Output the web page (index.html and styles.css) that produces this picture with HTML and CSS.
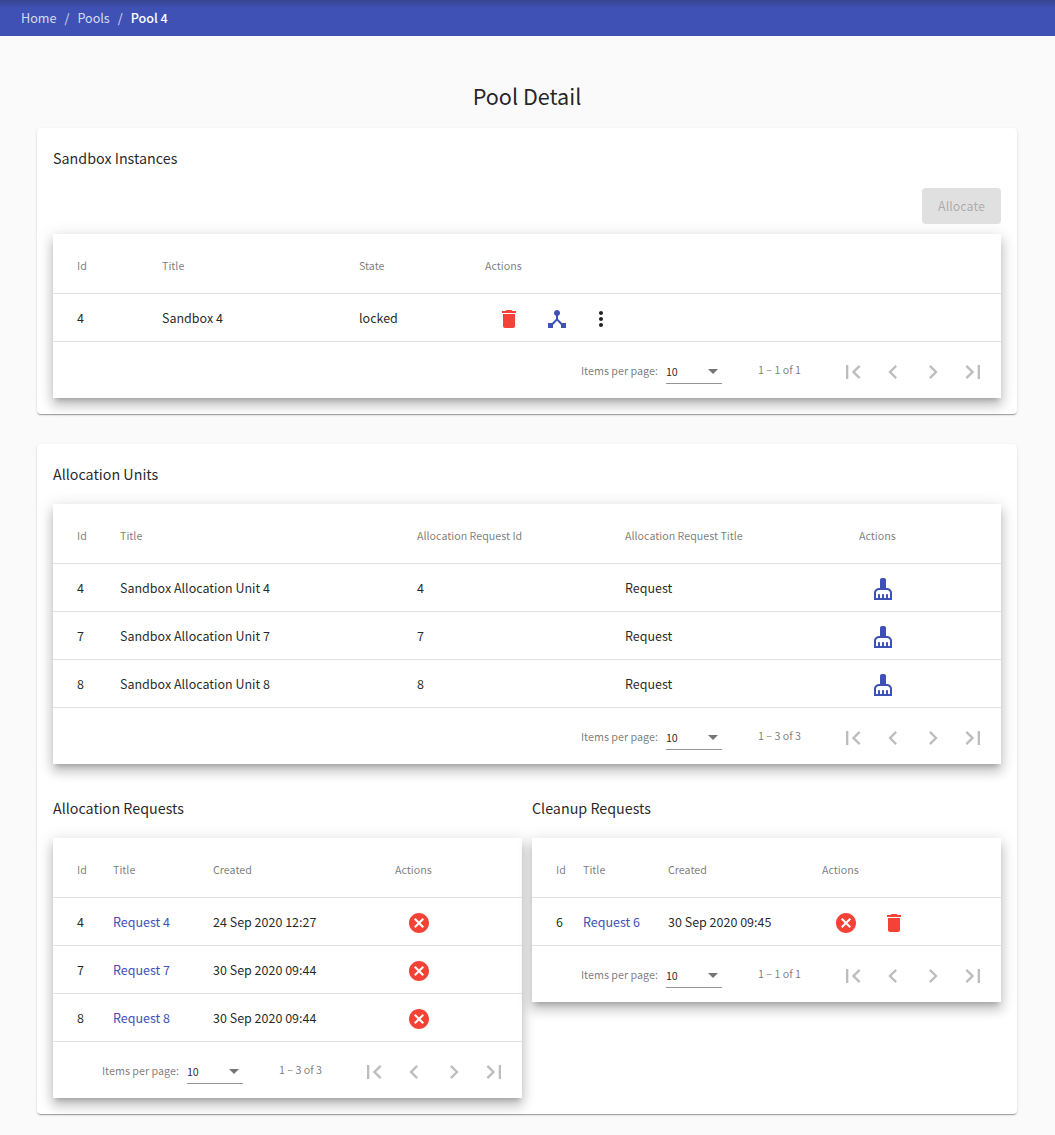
FILE: index.html
```html
<!DOCTYPE html>
<html lang="en">
<head>
    <meta charset="UTF-8">
    <title>Pool Detail</title>
    <link rel="stylesheet" href="styles.css">
</head>
<body>
    <svg class="defs" width="0" height="0">
        <symbol id="i-delete" viewBox="0 0 24 24"><path d="M6 19c0 1.1.9 2 2 2h8c1.1 0 2-.9 2-2V7H6v12zM19 4h-3.5l-1-1h-5l-1 1H5v2h14V4z"/></symbol>
        <symbol id="i-hub" viewBox="0 0 24 24"><path d="M17 16l-4-4V8.82C14.16 8.4 15 7.3 15 6c0-1.66-1.34-3-3-3S9 4.34 9 6c0 1.3.84 2.4 2 2.82V12l-4 4H3v5h5v-3.05l4-4.2 4 4.2V21h5v-5h-4z"/></symbol>
        <symbol id="i-more" viewBox="0 0 24 24"><path d="M12 8c1.1 0 2-.9 2-2s-.9-2-2-2-2 .9-2 2 .9 2 2 2zm0 2c-1.1 0-2 .9-2 2s.9 2 2 2 2-.9 2-2-.9-2-2-2zm0 6c-1.1 0-2 .9-2 2s.9 2 2 2 2-.9 2-2-.9-2-2-2z"/></symbol>
        <symbol id="i-broom" viewBox="0 0 24 24"><path d="M16 11h-1V3c0-1.1-.9-2-2-2h-2c-1.1 0-2 .9-2 2v8H8c-2.76 0-5 2.24-5 5v7h18v-7c0-2.76-2.24-5-5-5zm3 10h-2v-3c0-.55-.45-1-1-1s-1 .45-1 1v3h-2v-3c0-.55-.45-1-1-1s-1 .45-1 1v3H9v-3c0-.55-.45-1-1-1s-1 .45-1 1v3H5v-5c0-1.65 1.35-3 3-3h8c1.65 0 3 1.35 3 3v5z"/></symbol>
        <symbol id="i-cancel" viewBox="0 0 24 24"><path d="M12 2C6.47 2 2 6.47 2 12s4.47 10 10 10 10-4.47 10-10S17.53 2 12 2zm5 13.59L15.59 17 12 13.41 8.41 17 7 15.59 10.59 12 7 8.41 8.41 7 12 10.59 15.59 7 17 8.41 13.41 12 17 15.59z"/></symbol>
        <symbol id="i-first" viewBox="0 0 24 24"><path d="M18.41 16.59L13.82 12l4.59-4.59L17 6l-6 6 6 6zM6 6h2v12H6z"/></symbol>
        <symbol id="i-prev" viewBox="0 0 24 24"><path d="M15.41 7.41L14 6l-6 6 6 6 1.41-1.41L10.83 12z"/></symbol>
        <symbol id="i-next" viewBox="0 0 24 24"><path d="M10 6L8.59 7.41 13.17 12l-4.58 4.59L10 18l6-6z"/></symbol>
        <symbol id="i-last" viewBox="0 0 24 24"><path d="M5.59 7.41L10.18 12l-4.59 4.59L7 18l6-6-6-6zM16 6h2v12h-2z"/></symbol>
    </svg>

    <nav class="toolbar">
        <a>Home</a><span class="sep">/</span><a>Pools</a><span class="sep">/</span><a class="current">Pool 4</a>
    </nav>

    <main class="page">
        <h1>Pool Detail</h1>

        <section class="card card-sandboxes">
            <h2>Sandbox Instances</h2>
            <div class="controls"><button class="btn-allocate" disabled>Allocate</button></div>
            <div class="table cols-sandboxes">
                <div class="row head"><span>Id</span><span>Title</span><span>State</span><span>Actions</span></div>
                <div class="row">
                    <span>4</span><span>Sandbox 4</span><span>locked</span>
                    <span class="actions">
                        <i class="action red"><svg><use href="#i-delete"/></svg></i>
                        <i class="action blue"><svg><use href="#i-hub"/></svg></i>
                        <i class="action dark tight"><svg><use href="#i-more"/></svg></i>
                    </span>
                </div>
                <div class="paginator">
                    <span class="per-page">Items per page:</span>
                    <span class="select">10<b class="arrow"></b></span>
                    <span class="range">1 – 1 of 1</span>
                    <span class="pages">
                        <svg><use href="#i-first"/></svg><svg><use href="#i-prev"/></svg><svg><use href="#i-next"/></svg><svg><use href="#i-last"/></svg>
                    </span>
                </div>
            </div>
        </section>

        <section class="card">
            <h2>Allocation Units</h2>
            <div class="table cols-units">
                <div class="row head"><span>Id</span><span>Title</span><span>Allocation Request Id</span><span>Allocation Request Title</span><span>Actions</span></div>
                <div class="row">
                    <span>4</span><span>Sandbox Allocation Unit 4</span><span>4</span><span>Request</span>
                    <span class="actions"><i class="action blue"><svg><use href="#i-broom"/></svg></i></span>
                </div>
                <div class="row">
                    <span>7</span><span>Sandbox Allocation Unit 7</span><span>7</span><span>Request</span>
                    <span class="actions"><i class="action blue"><svg><use href="#i-broom"/></svg></i></span>
                </div>
                <div class="row">
                    <span>8</span><span>Sandbox Allocation Unit 8</span><span>8</span><span>Request</span>
                    <span class="actions"><i class="action blue"><svg><use href="#i-broom"/></svg></i></span>
                </div>
                <div class="paginator">
                    <span class="per-page">Items per page:</span>
                    <span class="select">10<b class="arrow"></b></span>
                    <span class="range">1 – 3 of 3</span>
                    <span class="pages">
                        <svg><use href="#i-first"/></svg><svg><use href="#i-prev"/></svg><svg><use href="#i-next"/></svg><svg><use href="#i-last"/></svg>
                    </span>
                </div>
            </div>

            <div class="requests">
                <div>
                    <h2>Allocation Requests</h2>
                    <div class="table cols-alloc">
                        <div class="row head"><span>Id</span><span>Title</span><span>Created</span><span>Actions</span></div>
                        <div class="row">
                            <span>4</span><a>Request 4</a><span>24 Sep 2020 12:27</span>
                            <span class="actions"><i class="action red"><svg><use href="#i-cancel"/></svg></i></span>
                        </div>
                        <div class="row">
                            <span>7</span><a>Request 7</a><span>30 Sep 2020 09:44</span>
                            <span class="actions"><i class="action red"><svg><use href="#i-cancel"/></svg></i></span>
                        </div>
                        <div class="row">
                            <span>8</span><a>Request 8</a><span>30 Sep 2020 09:44</span>
                            <span class="actions"><i class="action red"><svg><use href="#i-cancel"/></svg></i></span>
                        </div>
                        <div class="paginator">
                            <span class="per-page">Items per page:</span>
                            <span class="select">10<b class="arrow"></b></span>
                            <span class="range">1 – 3 of 3</span>
                            <span class="pages">
                                <svg><use href="#i-first"/></svg><svg><use href="#i-prev"/></svg><svg><use href="#i-next"/></svg><svg><use href="#i-last"/></svg>
                            </span>
                        </div>
                    </div>
                </div>
                <div>
                    <h2>Cleanup Requests</h2>
                    <div class="table cols-cleanup">
                        <div class="row head"><span>Id</span><span>Title</span><span>Created</span><span>Actions</span></div>
                        <div class="row">
                            <span>6</span><a>Request 6</a><span>30 Sep 2020 09:45</span>
                            <span class="actions">
                                <i class="action red"><svg><use href="#i-cancel"/></svg></i>
                                <i class="action red"><svg><use href="#i-delete"/></svg></i>
                            </span>
                        </div>
                        <div class="paginator">
                            <span class="per-page">Items per page:</span>
                            <span class="select">10<b class="arrow"></b></span>
                            <span class="range">1 – 1 of 1</span>
                            <span class="pages">
                                <svg><use href="#i-first"/></svg><svg><use href="#i-prev"/></svg><svg><use href="#i-next"/></svg><svg><use href="#i-last"/></svg>
                            </span>
                        </div>
                    </div>
                </div>
            </div>
        </section>
    </main>
</body>
</html>
```

FILE: styles.css
```css
* {
    box-sizing: border-box;
}
body {
    margin: 0;
    background-color: #fafafa;
    color: rgba(0, 0, 0, 0.87);
    font-family: "Noto Sans CJK SC", "Noto Sans", sans-serif;
    font-size: 12.5px;
}
.defs {
    position: absolute;
}
.toolbar {
    display: flex;
    align-items: center;
    height: 36px;
    padding-left: 21px;
    padding-bottom: 1px;
    background: linear-gradient(#36458f, #3f51b5 8px);
    color: rgba(255, 255, 255, 0.8);
    font-size: 12.6px;
}
.sep {
    margin: 0 8px;
}
.current {
    color: white;
    font-weight: 500;
}
.page {
    padding: 0 38px 21px 37px;
}
h1 {
    margin: 0;
    padding-top: 44px;
    height: 92px;
    font-size: 21.6px;
    font-weight: 400;
    line-height: 32px;
    text-align: center;
}
h2 {
    margin: 0;
    height: 44px;
    font-size: 14.3px;
    font-weight: 400;
    line-height: 28px;
}
.card {
    padding: 16px;
    background-color: white;
    border-radius: 4px;
    box-shadow: 0 2px 1px -1px rgba(0, 0, 0, 0.2), 0 1px 1px 0 rgba(0, 0, 0, 0.14), 0 1px 3px 0 rgba(0, 0, 0, 0.12);
}
.card-sandboxes {
    margin-bottom: 30px;
}
.controls {
    display: flex;
    justify-content: flex-end;
    margin-bottom: 10px;
}
.btn-allocate {
    width: 79px;
    height: 36px;
    padding: 0 0 2px;
    border: 0;
    border-radius: 4px;
    background-color: #e0e0e0;
    color: rgba(0, 0, 0, 0.26);
    font: inherit;
}
.table {
    background-color: white;
    box-shadow: 0 5px 5px -3px rgba(0, 0, 0, 0.2), 0 8px 10px 1px rgba(0, 0, 0, 0.14), 0 3px 14px 2px rgba(0, 0, 0, 0.12);
}
.row {
    display: grid;
    align-items: center;
    height: 48px;
    padding-left: 24px;
    border-bottom: 1px solid rgba(0, 0, 0, 0.12);
}
.row a {
    color: #3f51b5;
}
.head {
    height: 60px;
    padding-top: 3px;
    color: rgba(0, 0, 0, 0.54);
    font-size: 10.7px;
}
.cols-sandboxes .row {
    grid-template-columns: 85px 197px 126px 1fr;
}
.cols-units .row {
    grid-template-columns: 43px 297px 208px 234px 1fr;
}
.cols-alloc .row {
    grid-template-columns: 36px 100px 182px 1fr;
}
.cols-cleanup .row {
    grid-template-columns: 27px 85px 154px 1fr;
}
.actions {
    display: flex;
    align-items: center;
    height: 40px;
    margin-top: 2px;
}
.action {
    display: flex;
    align-items: center;
    justify-content: center;
    width: 40px;
    height: 40px;
    margin: 0 4px;
}
.action.tight {
    margin: 0;
}
.action svg {
    width: 24px;
    height: 24px;
    fill: currentColor;
}
.red {
    color: #f44336;
}
.blue {
    color: #3f51b5;
}
.dark {
    color: rgba(0, 0, 0, 0.87);
}
.paginator {
    display: flex;
    align-items: center;
    justify-content: flex-end;
    height: 56px;
    padding-right: 8px;
    color: rgba(0, 0, 0, 0.54);
    font-size: 10.7px;
}
.per-page {
    margin-right: 8px;
    font-size: 10.75px;
}
.select {
    display: flex;
    align-items: center;
    justify-content: space-between;
    width: 56px;
    height: 25px;
    margin-top: 3px;
    border-bottom: 1px solid rgba(0, 0, 0, 0.42);
    color: rgba(0, 0, 0, 0.87);
}
.arrow {
    margin-right: 4px;
    border-top: 5px solid rgba(0, 0, 0, 0.54);
    border-left: 5px solid transparent;
    border-right: 5px solid transparent;
}
.range {
    margin: 0 32px 1px 36px;
}
.pages {
    display: flex;
    margin-top: 4px;
}
.pages svg {
    width: 40px;
    height: 40px;
    padding: 6px;
    fill: rgba(0, 0, 0, 0.26);
}
.requests {
    display: grid;
    grid-template-columns: 469px 469px;
    gap: 10px;
    align-items: start;
    margin-top: 30px;
}
.requests h2 {
    height: 44px;
}
```
